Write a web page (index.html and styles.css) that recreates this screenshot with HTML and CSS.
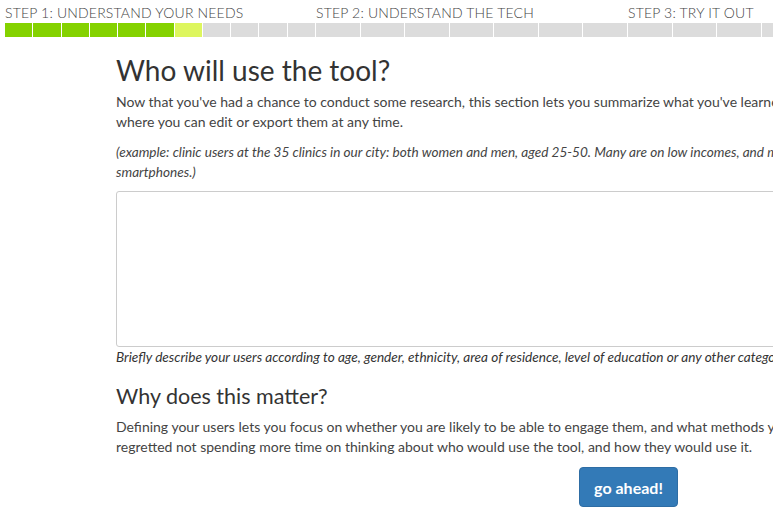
FILE: index.html
```html
<!DOCTYPE html>
<html>
<head>
<meta charset="utf-8">
<link rel="stylesheet" href="styles.css">
</head>
<body>
<div class="page">
  <div class="progress">
    <div class="step step-1">
      <div class="step-label">Step 1: Understand your needs</div>
      <div class="bar">
        <span class="seg done"></span><span class="seg done"></span><span class="seg done"></span><span class="seg done"></span><span class="seg done"></span><span class="seg done"></span><span class="seg current"></span><span class="seg"></span><span class="seg"></span><span class="seg"></span><span class="seg"></span>
      </div>
    </div>
    <div class="step">
      <div class="step-label">Step 2: Understand the tech</div>
      <div class="bar">
        <span class="seg"></span><span class="seg"></span><span class="seg"></span><span class="seg"></span><span class="seg"></span><span class="seg"></span><span class="seg"></span>
      </div>
    </div>
    <div class="step">
      <div class="step-label">Step 3: Try it out</div>
      <div class="bar">
        <span class="seg"></span><span class="seg"></span><span class="seg"></span><span class="seg"></span><span class="seg"></span><span class="seg"></span><span class="seg"></span>
      </div>
    </div>
  </div>

  <div class="content">
    <h2 class="title">Who will use the tool?</h2>
    <p class="lead">Now that you've had a chance to conduct some research, this section lets you summarize what you've learned. Your answers will be saved to a summary page, where you can edit or export them at any time.</p>
    <p class="example">(example: clinic users at the 35 clinics in our city: both women and men, aged 25-50. Many are on low incomes, and most have basic mobile phones rather than smartphones.)</p>
    <textarea class="answer"></textarea>
    <p class="help">Briefly describe your users according to age, gender, ethnicity, area of residence, level of education or any other category that is relevant.</p>
    <h3 class="subtitle">Why does this matter?</h3>
    <p class="lead">Defining your users lets you focus on whether you are likely to be able to engage them, and what methods you should use to reach them. Many projects have regretted not spending more time on thinking about who would use the tool, and how they would use it.</p>
    <div class="actions">
      <button class="btn-go">go ahead!</button>
    </div>
  </div>
</div>
</body>
</html>
```

FILE: styles.css
```css
html, body {
  margin: 0;
  padding: 0;
  overflow: hidden;
  background: #fff;
}

body {
  font-family: Lato, "Open Sans", sans-serif;
  color: #333;
}

.page {
  width: 1140px;
  padding-top: 3px;
}

.progress {
  display: flex;
  padding-left: 5px;
}

.step {
  width: 312px;
  display: flex;
  flex-direction: column;
}

.step-1 {
  width: 311px;
}

.step-label {
  font-size: 14px;
  font-weight: 300;
  line-height: 20px;
  letter-spacing: 0.18px;
  text-transform: uppercase;
  color: #444;
  white-space: nowrap;
}

.bar {
  display: flex;
  height: 14px;
}

.seg {
  flex: 1;
  margin-right: 1px;
  background: #dcdcdc;
}

.seg.done {
  background: #84d200;
}

.seg.current {
  background: #ddf65e;
}

.content {
  padding-left: 116px;
  width: 1025px;
}

.title {
  font-size: 28px;
  font-weight: 400;
  line-height: 33px;
  margin: 17px 0 5px;
  color: #333;
}

.lead {
  font-size: 14px;
  line-height: 20px;
  margin: 0 0 10px;
  color: #444;
  width: 1000px;
}

.example {
  font-size: 13.6px;
  line-height: 20px;
  font-style: italic;
  margin: 0 0 9px;
  color: #444;
  width: 940px;
}

.answer {
  display: block;
  box-sizing: border-box;
  width: 1000px;
  height: 156px;
  border: 1px solid #ccc;
  border-radius: 3px;
  margin: 0;
  padding: 6px 12px;
  resize: none;
  font-family: inherit;
}

.help {
  font-size: 13.6px;
  line-height: 20px;
  font-style: italic;
  margin: 0 0 16px;
  color: #333;
  white-space: nowrap;
}

.subtitle {
  font-size: 21.5px;
  font-weight: 400;
  line-height: 26px;
  margin: 0 0 8px;
  color: #333;
}

.actions {
  padding-left: 463px;
}

.btn-go {
  width: 99px;
  height: 40px;
  border: 1px solid #2e6da4;
  border-radius: 4px;
  background: #337ab7;
  color: #fff;
  font-family: inherit;
  font-weight: 700;
  font-size: 16px;
  padding: 0;
}
```
